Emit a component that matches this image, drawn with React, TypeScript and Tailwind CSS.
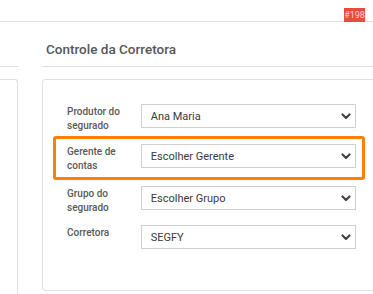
import React from "react";

function Chevron() {
  return (
    <svg width="10" height="7" viewBox="0 0 10 7" className="shrink-0">
      <polyline points="1.5,1.5 5,5 8.5,1.5" fill="none" stroke="#444" strokeWidth="2.2" strokeLinecap="round" strokeLinejoin="round" />
    </svg>
  );
}

function Select({ value }: { value: string }) {
  return (
    <div className="w-[216px] h-[24px] border border-[#cfcfcf] bg-white flex items-center justify-between pl-[9px] pr-[4px]">
      <span className="text-[11px] text-[#3a3a3a] leading-none">{value}</span>
      <Chevron />
    </div>
  );
}

function Row({ label, value }: { label: string; value: string }) {
  return (
    <div className="flex h-[28px]">
      <div className="w-[74px] pt-[1px] pr-[8px] text-[10px] leading-[14px] font-medium text-[#5a5a5a]">{label}</div>
      <Select value={value} />
    </div>
  );
}

export default function App() {
  return (
    <div className="relative w-[373px] h-[294px] overflow-hidden bg-white font-['Roboto',sans-serif]">
      <div className="h-[22px] border-b border-[#e0e0e0]" />
      <div className="absolute left-[344px] top-[8px] w-[21px] h-[14px] bg-[#e74c3c] text-[#ffd2cc] text-[9px] leading-[14px] text-center">#198</div>
      <div className="flex gap-[23px]">
        <div className="w-[19px] shrink-0">
          <div className="h-[45px] border-b border-[#e0e0e0]" />
          <div className="mt-[12px] w-[18px] h-[240px] border-t border-r border-[#e0e0e0] rounded-tr-[3px]" />
        </div>
        <div className="w-[360px] shrink-0">
          <div className="h-[45px] border-b border-[#e0e0e0] pt-[17px] pl-[4px] text-[13.5px] leading-[20px] font-medium text-[#575757]">
            Controle da Corretora
          </div>
          <div className="mt-[12px] h-[212px] border border-[#e0e0e0] rounded-[3px] pt-[24px]">
            <div className="ml-[10px] w-[312px] pl-[14px] pr-[9px]">
              <Row label="Produtor do segurado" value="Ana Maria" />
            </div>
            <div className="mt-[4px] ml-[10px] w-[312px] border-[3px] border-[#ff7f00] rounded-[3px] pl-[11px] pr-[6px] pt-[5px] pb-[5px]">
              <Row label="Gerente de contas" value="Escolher Gerente" />
            </div>
            <div className="mt-[6px] ml-[10px] w-[312px] pl-[14px] pr-[9px]">
              <Row label="Grupo do segurado" value="Escolher Grupo" />
            </div>
            <div className="mt-[11px] ml-[10px] w-[312px] pl-[14px] pr-[9px]">
              <Row label="Corretora" value="SEGFY" />
            </div>
          </div>
        </div>
      </div>
    </div>
  );
}
